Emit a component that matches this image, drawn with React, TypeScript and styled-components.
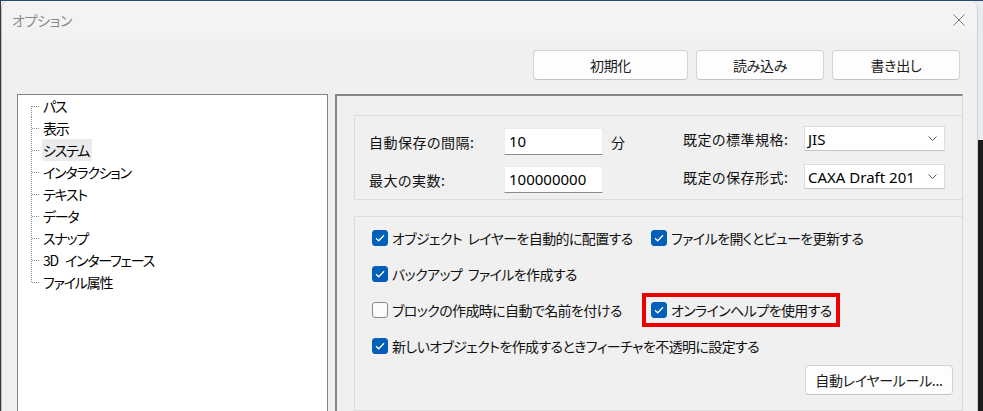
import React from 'react'
import styled, { createGlobalStyle } from 'styled-components'

const GlobalStyle = createGlobalStyle`
  html, body {
    margin: 0;
    padding: 0;
  }
  body {
    width: 983px;
    height: 411px;
    overflow: hidden;
    background: linear-gradient(to bottom, #e9ecef 0, #e9ecef 140px, #1c1c1c 140px);
    font-family: "Noto Sans CJK JP", "Noto Sans", sans-serif;
    font-feature-settings: "palt";
    color: #000;
  }
`

const StyledBackdrop = styled.div`
  border-top: 1px solid #274a75;
  border-left: 1px solid #3a3a3a;
  width: 982px;
  height: 410px;
`

const StyledDialog = styled.div`
  width: 977px;
  height: 410px;
  box-sizing: border-box;
  background: #f0f0f0;
  border-radius: 8px 8px 0 0;
  border-left: 1px solid #bdbdbd;
  border-right: 1px solid #cfcfcf;
  display: flex;
  flex-direction: column;
  overflow: hidden;
`

const StyledTitleBar = styled.div`
  height: 38px;
  flex-shrink: 0;
  display: flex;
  align-items: center;
  justify-content: space-between;
  padding: 0 12px 0 10px;
  background: #f3f3f3;
`

const StyledTitle = styled.span`
  font-size: 14px;
  color: #8a8a8a;
  letter-spacing: -0.3px;
`

const StyledToolbar = styled.div`
  display: flex;
  justify-content: flex-end;
  gap: 8px;
  padding: 11px 17px 0 0;
`

const StyledButton = styled.button<{ width: number }>`
  width: ${({ width }) => width}px;
  height: 30px;
  box-sizing: border-box;
  background: #fdfdfd;
  border: 1px solid #d3d3d3;
  border-bottom-color: #c2c2c2;
  border-radius: 4px;
  font-family: inherit;
  font-feature-settings: "palt";
  font-size: 14px;
  letter-spacing: -0.3px;
  color: #1a1a1a;
  padding: 0;
`

const StyledBody = styled.div`
  flex: 1;
  display: flex;
  gap: 7px;
  padding: 14px 14px 0 15px;
  min-height: 0;
`

const StyledTree = styled.div`
  width: 311px;
  flex-shrink: 0;
  box-sizing: border-box;
  background: #fff;
  border: 1px solid #828282;
  border-bottom: none;
  padding: 0 0 0 13px;
`

const StyledTreeItem = styled.div`
  display: flex;
  align-items: center;
  height: 22px;
`

const StyledTreeLabel = styled.span<{ selected?: boolean }>`
  font-size: 14px;
  line-height: 22px;
  letter-spacing: -1.2px;
  word-spacing: 5px;
  white-space: pre;
  padding: 0 3px 0 1px;
  background: ${({ selected }) => (selected ? '#ebebeb' : 'transparent')};
`

const StyledPanel = styled.div`
  width: 628px;
  flex-shrink: 0;
  box-sizing: border-box;
  border-top: 2px solid #858585;
  border-left: 2px solid #858585;
  border-right: 1px solid #d9d9d9;
  padding: 19px 0 0 17px;
`

const StyledGroup = styled.div<{ height: number; gapTop?: number }>`
  height: ${({ height }) => height}px;
  box-sizing: border-box;
  border: 1px solid #dcdcdc;
  border-right: none;
  margin-top: ${({ gapTop }) => gapTop ?? 0}px;
`

const StyledFieldsGroup = styled(StyledGroup)`
  display: flex;
  justify-content: space-between;
  padding: 0 17px 0 14px;
`

const StyledFieldGrid = styled.div<{ cols: string; rowHeight: number; rowGap: number; top: number }>`
  display: grid;
  grid-template-columns: ${({ cols }) => cols};
  grid-auto-rows: ${({ rowHeight }) => rowHeight}px;
  row-gap: ${({ rowGap }) => rowGap}px;
  align-items: center;
  padding-top: ${({ top }) => top}px;
`

const StyledLabel = styled.span`
  font-size: 14px;
  letter-spacing: 0.5px;
  color: #111;
`

const StyledUnit = styled.span`
  font-size: 14px;
  color: #111;
  padding-left: 8px;
`

const StyledInput = styled.div`
  height: 27px;
  box-sizing: border-box;
  background: #fff;
  border: 1px solid #ececec;
  border-bottom: 1px solid #8a8a8a;
  font-family: "Noto Sans", "Noto Sans CJK JP", sans-serif;
  font-size: 15px;
  line-height: 25px;
  padding-left: 4px;
`

const StyledSelect = styled.div`
  height: 25px;
  box-sizing: border-box;
  background: #fff;
  border: 1px solid #dcdcdc;
  border-bottom-color: #c4c4c4;
  display: flex;
  align-items: center;
  justify-content: space-between;
  padding: 0 7px 0 3px;
  font-family: "Noto Sans", "Noto Sans CJK JP", sans-serif;
  font-size: 15px;
  white-space: nowrap;
  overflow: hidden;
`

const StyledOptionsGroup = styled(StyledGroup)`
  display: flex;
  flex-direction: column;
  padding: 13px 9px 0 17px;
`

const StyledCheckGrid = styled.div`
  display: grid;
  grid-template-columns: 279px auto;
  grid-auto-rows: 16px;
  row-gap: 20px;
`

const StyledCheckItem = styled.label<{ span?: boolean; highlighted?: boolean }>`
  display: flex;
  align-items: center;
  gap: 4px;
  justify-self: start;
  align-self: start;
  height: 16px;
  grid-column: ${({ span }) => (span ? '1 / -1' : 'auto')};
  ${({ highlighted }) =>
    highlighted &&
    `
    border: 4px solid #ee0000;
    padding: 5px 4px 5px 5px;
    margin: -9px 0 0 -9px;
  `}
`

const StyledBox = styled.span<{ checked: boolean }>`
  width: 16px;
  height: 16px;
  box-sizing: border-box;
  border-radius: 3px;
  flex-shrink: 0;
  display: flex;
  align-items: center;
  justify-content: center;
  background: ${({ checked }) => (checked ? '#005fb8' : '#fbfbfb')};
  border: 1px solid ${({ checked }) => (checked ? '#005fb8' : '#8a8a8a')};
`

const StyledCheckText = styled.span`
  font-size: 14px;
  line-height: 16px;
  letter-spacing: -0.6px;
  word-spacing: 3px;
  white-space: pre;
  color: #111;
`

const StyledFooter = styled.div`
  display: flex;
  justify-content: flex-end;
  margin-top: 11px;
`

const CloseIcon = () => (
  <svg width="12" height="12" viewBox="0 0 12 12">
    <path d="M0.5 0.5 L11.5 11.5 M11.5 0.5 L0.5 11.5" stroke="#7a7a7a" strokeWidth="1" fill="none" />
  </svg>
)

const Chevron = () => (
  <svg width="9" height="5" viewBox="0 0 9 5">
    <path d="M0.5 0.5 L4.5 4.5 L8.5 0.5" stroke="#5c5c5c" strokeWidth="1" fill="none" />
  </svg>
)

const TreeConnector: React.FC<{ first?: boolean; last?: boolean }> = ({ first, last }) => (
  <svg width="11" height="22" viewBox="0 0 11 22">
    <line
      x1="0.5"
      y1={first ? 11 : 0}
      x2="0.5"
      y2={last ? 11.5 : 22}
      stroke="#8f8f8f"
      strokeWidth="1"
      strokeDasharray="1 1"
    />
    <line x1="1" y1="11.5" x2="9" y2="11.5" stroke="#8f8f8f" strokeWidth="1" strokeDasharray="1 1" />
  </svg>
)

const Checkbox: React.FC<{ checked: boolean; text: string; span?: boolean; highlighted?: boolean }> = ({
  checked,
  text,
  span,
  highlighted,
}) => (
  <StyledCheckItem span={span} highlighted={highlighted}>
    <StyledBox checked={checked}>
      {checked && (
        <svg width="10" height="8" viewBox="0 0 10 8">
          <path d="M1 4.2 L3.7 6.8 L9 1.2" stroke="#fff" strokeWidth="1.3" fill="none" />
        </svg>
      )}
    </StyledBox>
    <StyledCheckText>{text}</StyledCheckText>
  </StyledCheckItem>
)

const treeItems = ['パス', '表示', 'システム', 'インタラクション', 'テキスト', 'データ', 'スナップ', '3D インターフェース', 'ファイル属性']

const App: React.FC = () => {
  return (
    <>
      <GlobalStyle />
      <StyledBackdrop>
        <StyledDialog>
          <StyledTitleBar>
            <StyledTitle>オプション</StyledTitle>
            <CloseIcon />
          </StyledTitleBar>
          <StyledToolbar>
            <StyledButton width={155}>初期化</StyledButton>
            <StyledButton width={128}>読み込み</StyledButton>
            <StyledButton width={128}>書き出し</StyledButton>
          </StyledToolbar>
          <StyledBody>
            <StyledTree>
              {treeItems.map((item, i) => (
                <StyledTreeItem key={item}>
                  <TreeConnector first={i === 0} last={i === treeItems.length - 1} />
                  <StyledTreeLabel selected={item === 'システム'}>{item}</StyledTreeLabel>
                </StyledTreeItem>
              ))}
            </StyledTree>
            <StyledPanel>
              <StyledFieldsGroup height={85}>
                <StyledFieldGrid cols="135px 99px auto" rowHeight={27} rowGap={11} top={12}>
                  <StyledLabel>自動保存の間隔:</StyledLabel>
                  <StyledInput>10</StyledInput>
                  <StyledUnit>分</StyledUnit>
                  <StyledLabel>最大の実数:</StyledLabel>
                  <StyledInput>100000000</StyledInput>
                  <span />
                </StyledFieldGrid>
                <StyledFieldGrid cols="121px 141px" rowHeight={25} rowGap={13} top={10}>
                  <StyledLabel>既定の標準規格:</StyledLabel>
                  <StyledSelect>
                    <span>JIS</span>
                    <Chevron />
                  </StyledSelect>
                  <StyledLabel>既定の保存形式:</StyledLabel>
                  <StyledSelect>
                    <span>CAXA Draft 201</span>
                    <Chevron />
                  </StyledSelect>
                </StyledFieldGrid>
              </StyledFieldsGroup>
              <StyledOptionsGroup height={195} gapTop={16}>
                <StyledCheckGrid>
                  <Checkbox checked text="オブジェクト レイヤーを自動的に配置する" />
                  <Checkbox checked text="ファイルを開くとビューを更新する" />
                  <Checkbox checked text="バックアップ ファイルを作成する" span />
                  <Checkbox checked={false} text="ブロックの作成時に自動で名前を付ける" />
                  <Checkbox checked text="オンラインヘルプを使用する" highlighted />
                  <Checkbox checked text="新しいオブジェクトを作成するときフィーチャを不透明に設定する" span />
                </StyledCheckGrid>
                <StyledFooter>
                  <StyledButton width={148}>自動レイヤールール...</StyledButton>
                </StyledFooter>
              </StyledOptionsGroup>
            </StyledPanel>
          </StyledBody>
        </StyledDialog>
      </StyledBackdrop>
    </>
  )
}

export default App
